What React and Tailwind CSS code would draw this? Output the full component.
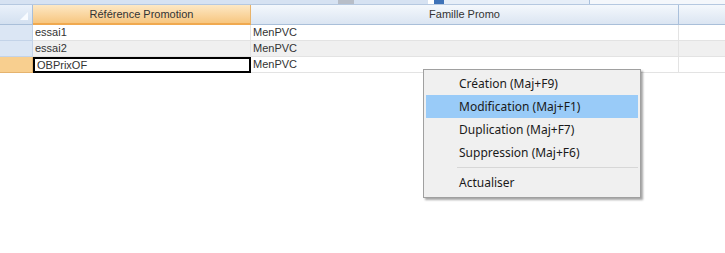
export default function App() {
  const rows = [
    { a: "essai1", b: "MenPVC", bg: "bg-white" },
    { a: "essai2", b: "MenPVC", bg: "bg-[#f0f0f0]" },
    { a: "OBPrixOF", b: "MenPVC", bg: "bg-white", sel: true },
  ];
  const items = ["Création (Maj+F9)", "Modification (Maj+F1)", "Duplication (Maj+F7)", "Suppression (Maj+F6)"];
  return (
    <div className="relative w-[725px] h-[253px] bg-white overflow-hidden" style={{ fontFamily: '"Liberation Sans", Arial, sans-serif' }}>
      {/* top strip */}
      <div className="flex h-[4px]">
        <div className="w-[338px] bg-[#d6e2f2]" />
        <div className="w-[16px] bg-[#b8bec8]" />
        <div className="w-[74px] bg-[#d6e2f2]" />
        <div className="w-[6px] bg-[#fff]" />
        <div className="w-[10px] bg-[#3f73b8]" />
        <div className="w-[146px] bg-[#e6eef8] border-r border-[#a9c0dc]" />
        <div className="flex-1 bg-[#f4f7fb]" />
      </div>
      {/* header */}
      <div className="flex h-[21px] text-[11px] text-[#333] border-t border-[#b5c8e0]">
        <div className="w-[33px] bg-gradient-to-b from-[#eaf1fa] to-[#d3e0f0] border-r border-b border-[#a9bfd9] relative">
          <div className="absolute right-[4px] bottom-[4px] w-0 h-0 border-l-[8px] border-l-transparent border-b-[8px] border-b-[#f8fbff]" />
        </div>
        <div className="w-[218px] bg-gradient-to-b from-[#fde8c4] to-[#f7c67f] border-r border-[#e8b36a] border-b-2 border-b-[#f0a94f] flex items-center justify-center">Référence Promotion</div>
        <div className="w-[428px] bg-gradient-to-b from-[#f4f8fc] to-[#dbe5f2] border-r border-[#aac0db] border-b border-b-[#a9bfd9] flex items-center justify-center">Famille Promo</div>
        <div className="flex-1 bg-gradient-to-b from-[#f4f8fc] to-[#dbe5f2] border-b border-[#a9bfd9]" />
      </div>
      {/* rows */}
      {rows.map((r, i) => (
        <div key={i} className={`flex h-[16px] text-[11px] text-[#333] ${r.bg}`}>
          <div className={`w-[33px] border-r border-b ${r.sel ? "bg-[#f8cf8f] border-[#e5b36e]" : "bg-[#dbe6f4] border-[#c3d3e8]"}`} />
          <div className={`w-[218px] flex items-center pl-[2px] ${r.sel ? "border-2 border-black pl-[1px]" : "border-r border-b border-[#e3e3e3]"}`}>{r.a}</div>
          <div className="w-[428px] flex items-center pl-[2px] border-r border-b border-[#e3e3e3]">{r.b}</div>
          <div className="flex-1 border-b border-[#e3e3e3]" />
        </div>
      ))}
      {/* context menu */}
      <div className="absolute left-[423px] top-[69px] w-[218px] bg-[#f0f0f0] border border-[#a0a0a0] shadow-[2px_2px_2px_rgba(0,0,0,0.35)] pt-[2px] pb-[2px] px-[2px] text-[12px] text-[#1a1a1a]" style={{ fontFamily: '"Noto Sans", "Open Sans", sans-serif' }}>
        {items.map((t, i) => (
          <div key={i} className={`h-[23px] flex items-center pl-[33px] ${i === 1 ? "bg-[#99cbf8]" : ""}`}>{t}</div>
        ))}
        <div className="h-[7px] flex items-center ml-[31px]">
          <div className="w-full h-px bg-[#d7d7d7]" />
        </div>
        <div className="h-[24px] flex items-center pl-[33px]">Actualiser</div>
      </div>
    </div>
  );
}
